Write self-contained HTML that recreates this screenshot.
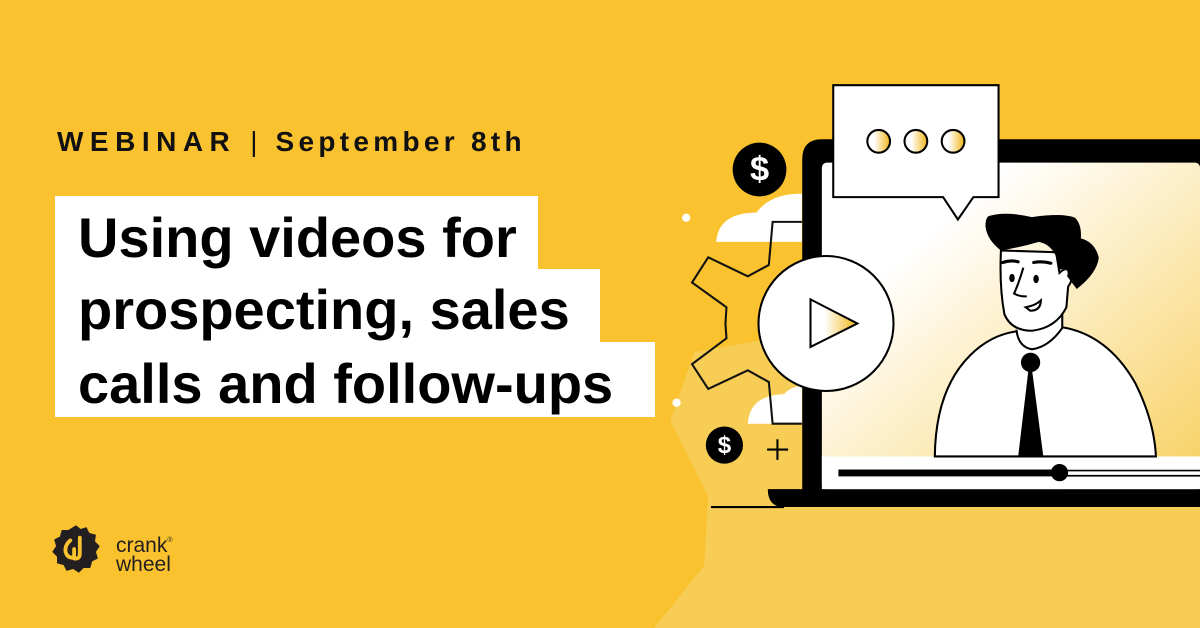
<!DOCTYPE html>
<html><head><meta charset="utf-8"><style>
html,body{margin:0;padding:0}
body{width:1200px;height:628px;overflow:hidden;background:#f9c22e;position:relative;font-family:"Liberation Sans",sans-serif}
.t{position:absolute;left:57px;top:126px;font-size:28px;font-weight:bold;color:#111;white-space:nowrap}
.box{position:absolute;left:55px;background:#fff}
.h{position:absolute;left:78px;font-size:56px;font-weight:bold;color:#000;white-space:nowrap;line-height:1}
.logo{position:absolute;left:116px;top:531px;font-size:21px;line-height:19px;color:#231f20}
svg{position:absolute;left:0;top:0}
</style></head><body>
<svg width="1200" height="628" viewBox="0 0 1200 628">
<defs>
<linearGradient id="sg" x1="0" y1="0" x2="1" y2="1"><stop offset="0.25" stop-color="#fff"/><stop offset="1" stop-color="#f8d060"/></linearGradient>
<linearGradient id="dg" x1="0" x2="1"><stop offset="0.3" stop-color="#fff"/><stop offset="1" stop-color="#f1b416"/></linearGradient>
</defs>
<g transform="translate(660,80) scale(0.3444)">
<path d="M100,790 L330,750 L420,700 L1568,700 L1568,1620 L-40,1620 L128,1410 L140,1210 L30,990 Z" fill="#f8cd55"/>
<path d="M163,470 Q170,385 280,385 Q320,330 412,330 L412,470 Z" fill="#fff"/>
<path d="M255,998 Q260,915 360,912 Q380,890 412,888 L412,998 Z" fill="#fff"/>
<path d="M412,412 L327,412 L316,537 L255,570 L140,515 L93,588 L193,660 L190,708 L193,750 L93,825 L140,897 L255,843 L316,877 L327,998 L412,998" fill="none" stroke="#111" stroke-width="6"/>
<path d="M470,172 L1568,172 L1568,1240 L360,1240 Q313,1240 313,1188 L413,1188 L413,230 Q413,172 470,172 Z" fill="#000"/>
<path d="M148,1240 L360,1240" stroke="#000" stroke-width="6"/>
<rect x="470" y="240" width="1098" height="948" rx="14" fill="url(#sg)"/>
<rect x="470" y="1093" width="1098" height="95" fill="#fff"/>
<rect x="518" y="1131" width="642" height="20" fill="#000"/>
<path d="M1160,1134 L1568,1134 M1160,1149 L1568,1149" stroke="#000" stroke-width="5"/>
<circle cx="1160" cy="1140" r="25" fill="#000"/>
<path d="M798,1093 Q800,900 900,800 Q960,740 1035,730 L1168,718 Q1300,740 1380,880 Q1435,990 1440,1093 Z" fill="#fff" stroke="#000" stroke-width="6"/>
<path d="M1035,725 Q1040,775 1080,782 Q1130,775 1168,720 L1168,670" fill="#fff" stroke="#000" stroke-width="6"/>
<circle cx="1076" cy="820" r="28" fill="#000"/>
<path d="M1040,1093 L1113,1093 L1080,840 L1070,840 Z" fill="#000"/>
<path d="M990,495 Q985,600 1000,680 Q1020,728 1080,728 Q1150,720 1180,660 L1185,600 Q1200,580 1195,555 Q1180,540 1160,560 L1150,500 Z" fill="#fff" stroke="#000" stroke-width="6"/>
<path d="M955,395 Q1000,380 1080,398 Q1170,385 1205,400 Q1225,420 1222,460 Q1262,470 1274,515 Q1270,560 1210,607 L1182,570 Q1190,545 1160,550 Q1150,480 1100,470 Q1050,485 990,495 Q950,465 945,425 Q945,400 955,395 Z" fill="#000"/>
<path d="M995,530 Q1020,522 1040,528 M1085,530 Q1110,525 1135,532" stroke="#000" stroke-width="9" stroke-linecap="round" fill="none"/>
<path d="M1055,545 Q1040,595 1028,620 Q1045,630 1065,628" stroke="#000" stroke-width="6" fill="none"/>
<ellipse cx="1022" cy="575" rx="8" ry="12" fill="#000"/>
<ellipse cx="1092" cy="578" rx="8" ry="12" fill="#000"/>
<path d="M1062,660 Q1090,655 1106,640 Q1105,670 1075,670 Z" fill="#fff" stroke="#000" stroke-width="6"/>
<path d="M503,15 L983,15 L983,340 L910,340 L865,405 L822,340 L503,340 Z" fill="#fff" stroke="#000" stroke-width="6"/>
<circle cx="635" cy="178" r="33" fill="url(#dg)" stroke="#000" stroke-width="6"/>
<circle cx="743" cy="178" r="33" fill="url(#dg)" stroke="#000" stroke-width="6"/>
<circle cx="851" cy="178" r="33" fill="url(#dg)" stroke="#000" stroke-width="6"/>
<circle cx="482" cy="707" r="196" fill="#fff" stroke="#000" stroke-width="6"/>
<path d="M437,637 L573,707 L437,775 Z" fill="url(#dg)" stroke="#000" stroke-width="6"/>
<circle cx="289" cy="260" r="78" fill="#000"/>
<text x="289" y="292" font-size="100" font-weight="bold" fill="#fff" text-anchor="middle" font-family="Liberation Sans">$</text>
<circle cx="187" cy="1060" r="54" fill="#000"/>
<text x="187" y="1083" font-size="70" font-weight="bold" fill="#fff" text-anchor="middle" font-family="Liberation Sans">$</text>
<path d="M341,1043 L341,1103 M311,1073 L372,1073" stroke="#000" stroke-width="6"/>
<circle cx="76" cy="400" r="12" fill="#fff"/>
<circle cx="48" cy="937" r="12" fill="#fff"/>
</g>
<g transform="translate(76,549) scale(0.95)">
<path d="M0,-25 L5,-21 L11,-23 L14,-17 L21,-15 L20,-8 L25,-3 L21,3 L23,10 L17,13 L15,20 L8,20 L3,25 L-3,21 L-10,23 L-13,17 L-20,15 L-20,8 L-25,3 L-21,-3 L-23,-10 L-17,-13 L-15,-20 L-8,-20 Z" fill="#231f20"/>
<path d="M-6,-9 Q-12,-4 -11,3 Q-9,10 -2,9 L-2,0 M4,-12 L4,5 Q4,11 -2,10" stroke="#f9c22e" stroke-width="4" fill="none" stroke-linecap="round"/>
</g>
</svg>
<div class="t"><span style="letter-spacing:6.5px">WEBINAR</span><span style="font-weight:normal;margin:0 18px 0 14px">|</span><span style="letter-spacing:4.3px">September 8th</span></div>
<div class="box" style="top:196px;width:483px;height:74px"></div>
<div class="box" style="top:269px;width:545px;height:74px"></div>
<div class="box" style="top:342px;width:600px;height:75px"></div>
<div class="h" style="top:210px">Using videos for</div>
<div class="h" style="top:282px">prospecting, sales</div>
<div class="h" style="top:356px">calls and follow-ups</div>
<div class="logo">crank<sup style="font-size:7px;vertical-align:10px">®</sup><br>wheel</div>
</body></html>
